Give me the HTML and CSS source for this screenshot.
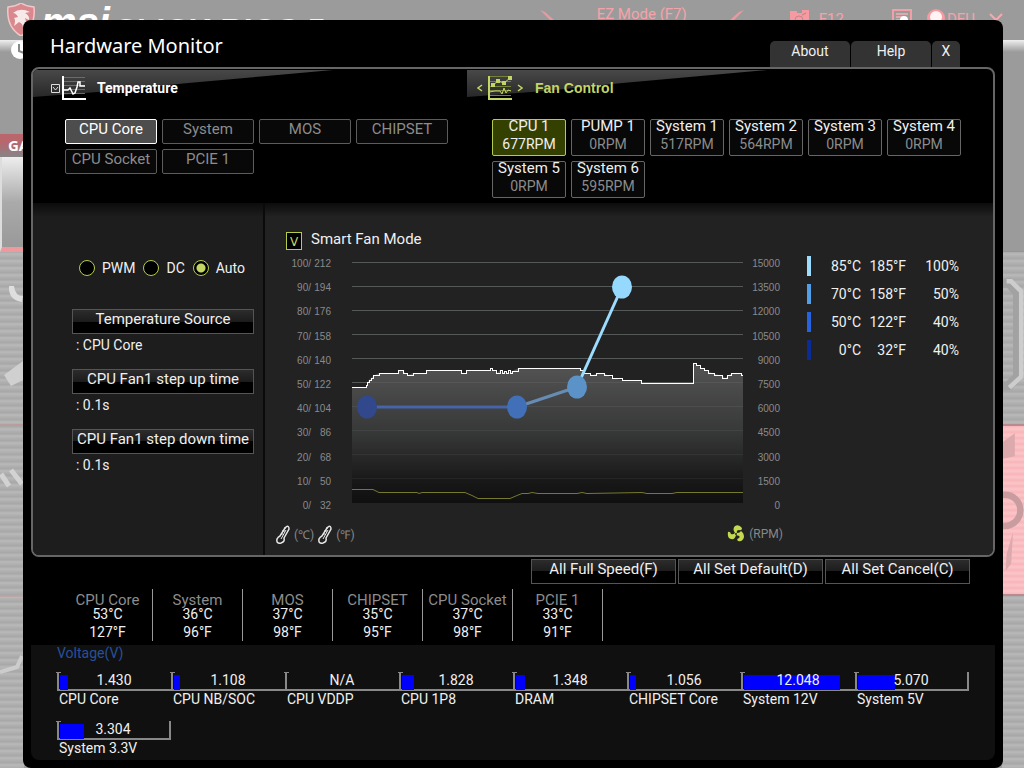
FILE: index.html
```
<!DOCTYPE html>
<html lang="en">
<head>
    <meta charset="UTF-8">
    <meta name="viewport" content="width=device-width, initial-scale=1.0">
    <title>Hardware Monitor</title>
    <link rel="stylesheet" href="styles.css">
</head>
<body>

<!-- Dimmed BIOS screen behind the dialog -->
<div class="backdrop">
    <div class="topbar">
        <svg class="shield" viewBox="0 0 28 33">
            <path d="M1 4 Q8 4 14 0 Q20 4 27 4 Q29 24 14 33 Q-1 24 1 4Z" fill="#d9888d" stroke="#f3c6c8" stroke-width="1.5"/>
            <path d="M6 10 Q13 4 23 9 L18 10 Q23 13 22 17 L18 15 Q21 22 16 28 Q17 21 12 19 L7 23 Q9 17 7 15 L11 14 Q9 10 6 10Z" fill="#f8e9e9"/>
        </svg>
        <span class="brand">msi</span>
        <span class="product">CLICK BIOS 5</span>
        <div class="ez">
            <svg class="slash" viewBox="0 0 14 10"><path d="M0 0 L5 2 L14 10 L10 10Z" fill="#e79aa0"/></svg>
            <span>EZ Mode (F7)</span>
            <svg class="slash" viewBox="0 0 14 10"><path d="M14 0 L9 2 L0 10 L4 10Z" fill="#e79aa0"/></svg>
        </div>
        <div class="tools">
            <svg class="tool" viewBox="0 0 20 16"><path d="M0 2h7v2h5v-3h7v15H0Z" fill="#f49aa0"/><circle cx="9" cy="11" r="4" fill="none" stroke="#c98489"/><path d="M12 6l4 -2" stroke="#b98084"/></svg>
            <span class="key">F12</span>
            <svg class="tool search" viewBox="0 0 20 16"><path d="M1 1h18v14H1Z" fill="none" stroke="#f2a0a6" stroke-width="2"/><path d="M4 5h12M4 8h8M4 11h5" stroke="#f2b0b4" stroke-width="1.500"/><circle cx="12" cy="11" r="4" fill="#fff"/></svg>
            <svg class="tool" viewBox="0 0 20 16"><circle cx="10" cy="9" r="9" fill="#f49aa0"/><circle cx="10" cy="8" r="6" fill="#fff3f3"/></svg>
            <span class="lang">DEU</span>
            <svg class="close" viewBox="0 0 14 14"><path d="M1 1L13 13M13 1L1 13" stroke="#f7a8ae" stroke-width="2"/></svg>
        </div>
    </div>
    <div class="rails">
        <div class="rail rail-left">
            <div class="rail-head">
                <svg class="clock" viewBox="0 0 20 20"><circle cx="10" cy="10" r="9" fill="#fff"/><path d="M9 4v7l5 2" fill="none" stroke="#888" stroke-width="2"/></svg>
            </div>
            <div class="rail-tag">GA</div>
            <div class="rail-card"></div>
            <div class="rail-metal">
                <svg viewBox="0 0 24 516" preserveAspectRatio="none">
                    <path d="M9 34Q8 48 22 50L23 44Q15 44 14 34Z" fill="#dedede"/>
                    <path d="M4 123L23 109V128L11 134Z" fill="#d0d0d0"/>
                    <path d="M0 173H24" stroke="#c48d8d"/>
                    <path d="M1 222L9 234M11 218L22 232" stroke="#d2d2d2" stroke-width="5"/>
                    <path d="M0 344H24" stroke="#c59b9b"/>
                    <path d="M22 404L17 415L0 420" fill="none" stroke="#ccc" stroke-width="4"/>
                </svg>
            </div>
        </div>
        <div class="rail rail-right">
            <div class="rail-plain"></div>
            <div class="rail-metal upper">
                <svg viewBox="0 0 24 172" preserveAspectRatio="none"><path d="M0 34H8L17 45V136L7 146H0" fill="none" stroke="#a2a2a2" stroke-width="10"/><path d="M5 32H10L21 43V136L8 148" fill="none" stroke="#cdcdcd" stroke-width="5"/></svg>
            </div>
            <div class="rail-red">
                <svg viewBox="0 0 24 171" preserveAspectRatio="none"><path d="M0 18L14 8V33L0 36ZM5 140L12 116L10 150L4 158Z" fill="#dca9ac"/><circle cx="3" cy="92" r="17" fill="none" stroke="#c99da0" stroke-width="7"/></svg>
            </div>
            <div class="rail-metal"></div>
        </div>
    </div>
</div>

<main class="dialog">
    <header class="title-row">
        <h1>Hardware Monitor</h1>
        <nav class="tabs">
            <button class="tab">About</button>
            <button class="tab">Help</button>
            <button class="tab tab-close">X</button>
        </nav>
    </header>

    <div class="panel">
        <div class="selectors">
            <section class="temperature">
                <div class="section-head">
                    <svg class="arrow-box" viewBox="0 0 9 9"><path d="M0.500 0.500h8v8h-8Z" fill="none" stroke="#ddd"/><path d="M2 3L4.500 6L7 3" fill="none" stroke="#ddd"/></svg>
                    <svg class="chart-icon" viewBox="0 0 24 24">
                        <path d="M1 1.500h22M1 5.500h22M1 9.500h22M1 13.500h22M1 17.500h22" stroke="#6c6c6c"/>
                        <path d="M1 0V23H24" fill="none" stroke="#fff" stroke-width="2"/>
                        <path d="M1 14H6L8 12L11 18L13 17L15 11L16 6L18 6V10H23" fill="none" stroke="#fff" stroke-width="1.500"/>
                    </svg>
                    <h2>Temperature</h2>
                </div>
                <div class="temp-buttons">
                    <button class="select-btn active">CPU Core</button>
                    <button class="select-btn">System</button>
                    <button class="select-btn">MOS</button>
                    <button class="select-btn">CHIPSET</button>
                    <button class="select-btn">CPU Socket</button>
                    <button class="select-btn">PCIE 1</button>
                </div>
            </section>
            <section class="fans">
                <div class="section-head">
                    <svg class="chevron" viewBox="0 0 6 8"><path d="M5 1L1 4L5 7" fill="none" stroke="#c3d665" stroke-width="1.500"/></svg>
                    <svg class="chart-icon" viewBox="0 0 24 24">
                        <path d="M1 0.500h22M1 5.500h22M1 10.500h22M1 14.500h22M1 19.500h22" stroke="#73813a"/>
                        <path d="M1 0V23H24" fill="none" stroke="#c3d665" stroke-width="2"/>
                        <path d="M5 9L10 5L16 7L22 2" fill="none" stroke="#c3d665"/>
                        <path d="M3 7h4v4H3ZM8 3h4v4H8ZM14 5h4v4h-4ZM20 0h4v4h-4Z" fill="#c3d665"/>
                        <path d="M1 16L7 15H12L14 18L16 12L18 17L20 14L23 15" fill="none" stroke="#c3d665"/>
                    </svg>
                    <svg class="chevron" viewBox="0 0 6 8"><path d="M1 1L5 4L1 7" fill="none" stroke="#c3d665" stroke-width="1.500"/></svg>
                    <h2>Fan Control</h2>
                </div>
                <div class="fan-buttons">
                    <button class="fan-btn active">CPU 1 <span>677RPM</span></button>
                    <button class="fan-btn">PUMP 1 <span>0RPM</span></button>
                    <button class="fan-btn">System 1 <span>517RPM</span></button>
                    <button class="fan-btn">System 2 <span>564RPM</span></button>
                    <button class="fan-btn">System 3 <span>0RPM</span></button>
                    <button class="fan-btn">System 4 <span>0RPM</span></button>
                    <button class="fan-btn">System 5 <span>0RPM</span></button>
                    <button class="fan-btn">System 6 <span>595RPM</span></button>
                </div>
            </section>
        </div>

        <div class="control">
            <form class="fan-settings">
                <div class="modes">
                    <label><input type="radio" name="mode">PWM</label>
                    <label><input type="radio" name="mode">DC</label>
                    <label><input type="radio" name="mode" checked>Auto</label>
                </div>
                <button type="button" class="bar-btn">Temperature Source</button>
                <p>: CPU Core</p>
                <button type="button" class="bar-btn">CPU Fan1 step up time</button>
                <p>: 0.1s</p>
                <button type="button" class="bar-btn">CPU Fan1 step down time</button>
                <p>: 0.1s</p>
            </form>

            <section class="curve">
                <div class="curve-main">
                    <label class="smart"><input type="checkbox" checked>Smart Fan Mode</label>
                    <div class="plot">
                        <div class="axis axis-temp">
                            <div><span>100/</span><span>212</span></div>
                            <div><span>90/</span><span>194</span></div>
                            <div><span>80/</span><span>176</span></div>
                            <div><span>70/</span><span>158</span></div>
                            <div><span>60/</span><span>140</span></div>
                            <div><span>50/</span><span>122</span></div>
                            <div><span>40/</span><span>104</span></div>
                            <div><span>30/</span><span>86</span></div>
                            <div><span>20/</span><span>68</span></div>
                            <div><span>10/</span><span>50</span></div>
                            <div><span>0/</span><span>32</span></div>
                        </div>
                        <svg class="graph" viewBox="0 0 391 242" preserveAspectRatio="none">
                            <defs>
                                <linearGradient id="area" x1="0" y1="100" x2="0" y2="241" gradientUnits="userSpaceOnUse">
                                    <stop offset="0" stop-color="#616161"/>
                                    <stop offset="0.500" stop-color="#3c3d3d"/>
                                    <stop offset="0.850" stop-color="#151515"/>
                                    <stop offset="1" stop-color="#0b0b0b"/>
                                </linearGradient>
                            </defs>
                            <path class="grid" d="M0 0.500H391M0 24.500H391M0 48.500H391M0 72.500H391M0 96.500H391M0 120.500H391M0 144.500H391M0 168.500H391M0 192.500H391M0 216.500H391"/>
                            <path fill="url(#area)" fill-opacity="0.800" d="M0 125H14L16 119L20 115L23 113L27 111H46V108H51L53 111L56 113L61 111H74V108H109V111H114V108H138L143 109L145 111L148 108L150 111L153 109L156 111L160 109L167 106H228L233 111L241 113L245 111H252L260 116L270 118H289V121H341V101L348 105L360 111L371 114L373 116L380 111H389L391 113V241H0Z"/>
                            <path class="temp-line" d="M0 125.500H14.500V123.500H15.500V120.500H17.500V118.500H19.500V116.500H21.500V113.500H27.500V111.500H46.500V108.500H51.500V111.500H55.500V113.500H61.500V111.500H74.500V108.500H109.500V111.500H114.500V108.500H138.500V106.500H140.500V108.500H144.500V111.500H148.500V108.500H150.500V111.500H152.500V109.500H154.500V111.500H156.500V108.500H158.500V111.500H160.500V109.500H166.500V106.500H228.500V108.500H231.500V111.500H238.500V113.500H244.500V111.500H252.500V113.500H260.500V116.500H270.500V118.500H289.500V121.500H341.500V101.500H344.500V103.500H348.500V106.500H352.500V108.500H356.500V111.500H362.500V113.500H370.500V116.500H375.500V113.500H379.500V111.500H389.500V113.500H391"/>
                            <path class="fan-line" d="M0 227.500H21L27 230.500H65L67 231.500L70 230.500H113L120 233.500L126 236.500H158L165 233.500L170 231.500H176L180 230.500L186 231.500H225L230 230.500L235 231.500L290 230.500L295 231.500H320L325 230.500H391"/>
                            <path d="M15 145H165" stroke="#4565a8" stroke-width="3"/>
                            <path d="M165 145L225 125" stroke="#668cb5" stroke-width="3"/>
                            <path d="M225 125L270 25" stroke="#9bdcff" stroke-width="3"/>
                            <ellipse cx="15" cy="145" rx="10" ry="11.500" fill="#31498c"/>
                            <ellipse cx="165" cy="145" rx="10" ry="11.500" fill="#4270b8"/>
                            <ellipse cx="225" cy="125" rx="10" ry="11.500" fill="#5b93c9"/>
                            <ellipse cx="270" cy="25" rx="10" ry="11.500" fill="#95d9ff"/>
                        </svg>
                        <div class="axis axis-rpm">
                            <div>15000</div>
                            <div>13500</div>
                            <div>12000</div>
                            <div>10500</div>
                            <div>9000</div>
                            <div>7500</div>
                            <div>6000</div>
                            <div>4500</div>
                            <div>3000</div>
                            <div>1500</div>
                            <div>0</div>
                        </div>
                    </div>
                    <div class="units">
                        <svg class="thermo" viewBox="0 0 14 19"><path d="M10 2Q13 0 13 4L8 13Q9 17 5 18Q0 19 1 14Q2 12 4 11L9 3Z" fill="none" stroke="#e8e8e8" stroke-width="1.500"/><path d="M5 14L10 5M6 6h3M8 3h2M5 9h2" stroke="#e8e8e8"/></svg>
                        <span>(℃)</span>
                        <svg class="thermo" viewBox="0 0 14 19"><path d="M10 2Q13 0 13 4L8 13Q9 17 5 18Q0 19 1 14Q2 12 4 11L9 3Z" fill="none" stroke="#e8e8e8" stroke-width="1.500"/><path d="M5 14L10 5M6 6h3M8 3h2M5 9h2" stroke="#e8e8e8"/></svg>
                        <span>(℉)</span>
                        <svg class="fan-icon" viewBox="0 0 18 18"><path d="M8 8Q5 4 8 1Q12 -1 15 3Q15 6 12 5Q9 5 10 8Q13 8 14 6Q17 8 17 12Q16 17 11 16Q9 14 12 13Q14 11 9 10Q8 15 4 14Q0 13 1 7Q3 6 4 9Q6 10 8 8Z" fill="#c3d94e"/><circle cx="9" cy="9" r="1" fill="#222"/></svg>
                        <span>(RPM)</span>
                    </div>
                </div>
                <table class="legend">
                    <tr class="p1"><td class="swatch"></td><td>85°C</td><td>185°F</td><td>100%</td></tr>
                    <tr class="p2"><td class="swatch"></td><td>70°C</td><td>158°F</td><td>50%</td></tr>
                    <tr class="p3"><td class="swatch"></td><td>50°C</td><td>122°F</td><td>40%</td></tr>
                    <tr class="p4"><td class="swatch"></td><td>0°C</td><td>32°F</td><td>40%</td></tr>
                </table>
            </section>
        </div>
    </div>

    <div class="actions">
        <button class="bar-btn">All Full Speed(F)</button>
        <button class="bar-btn">All Set Default(D)</button>
        <button class="bar-btn">All Set Cancel(C)</button>
    </div>

    <ul class="readings">
        <li><span>CPU Core</span>53°C<br>127°F</li>
        <li><span>System</span>36°C<br>96°F</li>
        <li><span>MOS</span>37°C<br>98°F</li>
        <li><span>CHIPSET</span>35°C<br>95°F</li>
        <li><span>CPU Socket</span>37°C<br>98°F</li>
        <li><span>PCIE 1</span>33°C<br>91°F</li>
    </ul>

    <section class="voltage">
        <h3>Voltage(V)</h3>
        <div class="gauges">
            <div class="gauge"><div class="bar"><i style="width: 7%"></i><b>1.430</b></div><span>CPU Core</span></div>
            <div class="gauge"><div class="bar"><i style="width: 5%"></i><b>1.108</b></div><span>CPU NB/SOC</span></div>
            <div class="gauge"><div class="bar"><i style="width: 0%"></i><b>N/A</b></div><span>CPU VDDP</span></div>
            <div class="gauge"><div class="bar"><i style="width: 11%"></i><b>1.828</b></div><span>CPU 1P8</span></div>
            <div class="gauge"><div class="bar"><i style="width: 8%"></i><b>1.348</b></div><span>DRAM</span></div>
            <div class="gauge"><div class="bar"><i style="width: 5%"></i><b>1.056</b></div><span>CHIPSET Core</span></div>
            <div class="gauge"><div class="bar"><i style="width: 86%"></i><b>12.048</b></div><span>System 12V</span></div>
            <div class="gauge last"><div class="bar"><i style="width: 34%"></i><b>5.070</b></div><span>System 5V</span></div>
            <div class="gauge last"><div class="bar"><i style="width: 22%"></i><b>3.304</b></div><span>System 3.3V</span></div>
        </div>
    </section>
</main>

</body>
</html>
```
FILE: styles.css
```
* {
    box-sizing: border-box;
}
body {
    margin: 0;
    position: relative;
    min-height: 100vh;
    background-color: #9b9b9b;
    color: #f0f0f0;
    font-family: Roboto, "Liberation Sans", sans-serif;
    font-size: 15px;
}
h1, h2, h3, p, ul {
    margin: 0;
    padding: 0;
}
button {
    font: inherit;
    color: inherit;
    padding: 0;
    white-space: nowrap;
}
svg {
    display: block;
    flex: none;
}

/* screen behind the dialog */
.backdrop {
    position: absolute;
    inset: 0;
    overflow: hidden;
    display: flex;
    flex-direction: column;
}
.topbar {
    display: flex;
    height: 40px;
    flex: none;
    padding: 3px 21px 0 7px;
    background-color: #9b9b9b;
    color: #f5a3aa;
}
.shield {
    width: 28px;
    height: 33px;
}
.brand {
    margin-left: 6px;
    padding-top: 3px;
    font: italic bold 40px/32px "Liberation Sans", sans-serif;
    color: #fff;
}
.product {
    margin-left: 4px;
    padding-top: 12px;
    font: bold 32px/30px "Liberation Sans", sans-serif;
    color: #f2f2f2;
    white-space: nowrap;
}
.ez {
    display: flex;
    gap: 43px;
    margin-left: auto;
    line-height: 22px;
}
.slash {
    width: 14px;
    height: 10px;
    margin-top: 7px;
}
.tools {
    display: flex;
    margin-left: 46px;
    padding-top: 6px;
    line-height: 20px;
}
.tool {
    width: 20px;
    height: 16px;
    overflow: visible;
}
.key {
    margin: 0 48px 0 9px;
}
.search {
    margin-right: 14px;
}
.lang {
    margin: 0 14px 0 1px;
}
.close {
    width: 14px;
    height: 14px;
    margin-top: 4px;
}
.rails {
    display: flex;
    flex: 1;
    justify-content: space-between;
}
.rail {
    display: flex;
    flex-direction: column;
    width: 24px;
}
.rail svg {
    width: 100%;
}
.rail-head {
    height: 94px;
    background: linear-gradient(#efefef, #9b9b9b 12px);
}
.rail .clock {
    width: 20px;
    height: 20px;
    margin-left: 10px;
}
.rail-tag {
    height: 23px;
    padding: 2px 0 0 8px;
    background: linear-gradient(#b9666d 8px, #858585);
    font: bold 15px/18px "Open Sans", sans-serif;
    color: #fff;
}
.rail-card {
    height: 95px;
    border-left: 2px solid #ddd;
    border-bottom: 5px solid #ee999e;
    background: linear-gradient(#eee, #aaa 50%, #999);
}
.rail-metal {
    flex: 1;
    background: repeating-linear-gradient(#aaa 0, #b9b9b9 2px, #b0b0b0 4px, #a7a7a7 7px);
}
.rail-left .rail-metal svg {
    height: 100%;
}
.rail-plain {
    height: 211px;
    background: linear-gradient(#efefef, #9b9b9b 12px);
}
.rail-right {
    width: 22px;
}
.rail-metal.upper {
    flex: none;
    height: 173px;
    border-top: 1px solid #b28a8c;
}
.rail-red {
    height: 172px;
    border-top: 2px solid #b98b8e;
    border-bottom: 2px solid #b98b8e;
    background: repeating-linear-gradient(#f8b4b8 0, #fbc5c8 3px, #f5b8bb 6px);
}

.dialog {
    position: relative;
    margin: 20px 21px 0 23px;
    padding: 0 8px 8px;
    border-radius: 8px;
    background-color: #000;
}
.title-row {
    display: flex;
    justify-content: space-between;
    align-items: flex-end;
    height: 47px;
    padding: 0 35px 0 19px;
}
h1 {
    align-self: center;
    padding-top: 4px;
    color: #fff;
    font: 20px/24px "Noto Sans", sans-serif;
}
.tabs {
    display: flex;
    gap: 1px;
}
.tab {
    width: 80px;
    height: 26px;
    padding-bottom: 6px;
    border: 0;
    border-radius: 5px 5px 0 0;
    background-color: #333;
    font-size: 14px;
}
.tab-close {
    width: 28px;
}

.panel {
    border: 2px solid #666;
    border-radius: 8px;
    overflow: hidden;
}
.selectors {
    display: grid;
    grid-template-columns: 434px 1fr;
    height: 134px;
}
.section-head {
    position: relative;
    display: flex;
    align-items: center;
    height: 28px;
    padding-top: 10px;
}
/* glossy wedge under the heading */
.section-head::before {
    content: "";
    position: absolute;
    inset: 1px auto 0 0;
    width: 300px;
    background: linear-gradient(#484848, #282828);
    clip-path: polygon(0 0, 100% 0, 76% 24%, 50% 50%, 28% 76%, 0 100%);
}
.section-head > * {
    position: relative;
}
h2 {
    font-size: 14px;
    line-height: 20px;
    color: #fff;
}
.temperature .section-head {
    padding-left: 18px;
}
.fans .section-head {
    padding-left: 10px;
}
.fans h2 {
    margin-left: 12px;
    font-family: "Liberation Sans", sans-serif;
    color: #c3d665;
}
.temperature h2 {
    margin-left: 11px;
}
.arrow-box {
    width: 9px;
    height: 9px;
    margin-right: 2px;
}
.chart-icon {
    width: 24px;
    height: 24px;
}
.chevron {
    width: 6px;
    height: 8px;
    margin: 0 5px 0 0;
}
.chart-icon + .chevron {
    margin: 0 0 0 5px;
}
.temp-buttons {
    display: flex;
    flex-wrap: wrap;
    gap: 5px;
    padding: 22px 0 0 32px;
}
.select-btn {
    width: 92px;
    height: 25px;
    padding-bottom: 5px;
    border: 1px solid #5c5c5c;
    border-radius: 2px;
    background-color: #080808;
    color: #8c8c8c;
}
.select-btn.active {
    border-color: #fff;
    background-color: #4d4d4d;
    color: #fff;
}
.fan-buttons {
    display: flex;
    flex-wrap: wrap;
    gap: 5px;
    padding: 22px 30px 0 25px;
}
.fan-btn {
    display: flex;
    flex-direction: column;
    align-items: center;
    justify-content: center;
    width: 74px;
    height: 37px;
    padding-bottom: 5px;
    border: 1px solid #666;
    border-radius: 2px;
    background-color: #080808;
    line-height: 18px;
}
.fan-btn span {
    font-size: 14px;
    color: #8c8c8c;
}
.fan-btn.active {
    border-color: #b5cc4a;
    background-color: #344000;
}
.fan-btn.active span {
    color: #f0f0f0;
}

.control {
    display: grid;
    grid-template-columns: 232px 1fr;
    height: 352px;
    background: linear-gradient(#0c0c0c, #222 14px);
}
.fan-settings {
    padding: 55px 9px 0 39px;
    border-right: 2px solid #0a0a0a;
    background: linear-gradient(#0c0c0c, #1d1d1d 14px);
}
.modes {
    display: flex;
    gap: 8px;
    height: 20px;
    margin: 0 -4px 31px 7px;
}
.modes label {
    display: flex;
    align-items: center;
    gap: 7px;
    font-size: 14px;
    line-height: 20px;
}
.modes input {
    appearance: none;
    width: 16px;
    height: 16px;
    margin: 0;
    border: 1px solid #b5cc4a;
    border-radius: 50%;
    background-color: #000;
}
.modes input:checked {
    background: radial-gradient(circle, #c3d665 4px, #000 5px);
}
.bar-btn {
    height: 25px;
    padding-bottom: 5px;
    border: 1px solid #555;
    background: linear-gradient(#2c2c2c, #1c1c1c 50%, #000 50%);
}
.fan-settings .bar-btn {
    display: block;
    width: 100%;
}
.fan-settings p {
    height: 35px;
    padding-left: 4px;
    font-size: 14px;
    line-height: 22px;
}

.curve {
    display: flex;
    align-items: flex-start;
    padding: 27px 34px 0 21px;
}
.curve-main {
    flex: 1;
}
.smart {
    display: flex;
    gap: 9px;
    height: 28px;
    line-height: 18px;
}
.smart input {
    appearance: none;
    width: 16px;
    height: 18px;
    margin: 2px 0 0;
    border: 1px solid #b5cc4a;
    background-color: #000;
}
.smart input:checked::before {
    content: "V";
    display: block;
    font: 12px/18px "DejaVu Sans", sans-serif;
    text-align: center;
    color: #c3d665;
}
.plot {
    display: flex;
    padding-right: 3px;
}
.axis {
    display: flex;
    flex-direction: column;
    justify-content: space-between;
    height: 254px;
    font: 10px/12px "Liberation Sans", sans-serif;
    color: #8a8a8a;
    text-align: right;
}
.axis-temp {
    width: 45px;
}
.axis-temp div {
    display: grid;
    grid-template-columns: 1fr 20px;
}
.axis-rpm {
    width: 37px;
}
.graph {
    flex: 1;
    min-width: 0;
    height: 242px;
    margin: 4px 0 0 21px;
}
.grid {
    stroke: #a0aaa5;
    stroke-opacity: 0.4;
}
.temp-line {
    fill: none;
    stroke: #fff;
    shape-rendering: crispEdges;
}
.fan-line {
    fill: none;
    stroke: #77782f;
}
.units {
    display: flex;
    align-items: center;
    gap: 4px;
    height: 20px;
    margin: 12px 0 0 -10px;
    font-size: 12px;
    color: #888;
}
.thermo {
    width: 14px;
    height: 19px;
}
.fan-icon {
    width: 18px;
    height: 18px;
    margin-left: auto;
}
.legend {
    margin: 18px 0 0 24px;
    border-collapse: separate;
    border-spacing: 0 8px;
    font-size: 14px;
    line-height: 20px;
}
.legend td {
    width: 45px;
    padding: 0;
    text-align: right;
}
.legend td:nth-child(2) {
    width: 50px;
}
.legend td:last-child {
    width: 53px;
}
.legend .swatch {
    width: 4px;
    height: 20px;
}
.p1 .swatch { background-color: #9bdcff; }
.p2 .swatch { background-color: #4fa0e8; }
.p3 .swatch { background-color: #2563e0; }
.p4 .swatch { background-color: #0b2c96; }

.actions {
    display: flex;
    justify-content: flex-end;
    gap: 2px;
    padding: 2px 25px 0 0;
}
.actions .bar-btn {
    width: 145px;
}

.readings {
    display: flex;
    margin: 5px 0 4px 32px;
    list-style: none;
    font-size: 14px;
    line-height: 18px;
    text-align: center;
}
.readings li {
    width: 90px;
    height: 52px;
    border-right: 1px solid #999;
}
.readings span {
    display: block;
    padding-top: 4px;
    margin-bottom: -2px;
    font-size: 15px;
    line-height: 14px;
    color: #8c8c8c;
    white-space: nowrap;
}

.voltage {
    padding: 0 26px 4px;
    border-radius: 0 0 8px 8px;
    background-color: #101010;
}
h3 {
    margin-bottom: 11px;
    font-size: 14px;
    font-weight: normal;
    line-height: 16px;
    color: #28509a;
}
.gauges {
    display: grid;
    grid-template-columns: repeat(8, 1fr);
    row-gap: 14px;
}
.gauge {
    font-size: 14px;
    line-height: 16px;
}
.gauge span {
    display: block;
    padding-left: 2px;
    white-space: nowrap;
}
.bar {
    position: relative;
    display: grid;
    align-items: center;
    height: 19px;
    border: solid #888;
    border-width: 0 0 2px 2px;
}
/* cap on top of each divider */
.bar::before {
    content: "";
    position: absolute;
    top: 0;
    left: -3px;
    width: 5px;
    height: 1px;
    background-color: #888;
}
.bar i, .bar b {
    grid-area: 1 / 1;
}
.bar i {
    height: 15px;
    margin-left: 1px;
    background-color: #00f;
}
.bar b {
    padding: 0 2px 4px 0;
    font-weight: normal;
    text-align: center;
    z-index: 1;
}
.last .bar {
    border-right-width: 2px;
}
```
